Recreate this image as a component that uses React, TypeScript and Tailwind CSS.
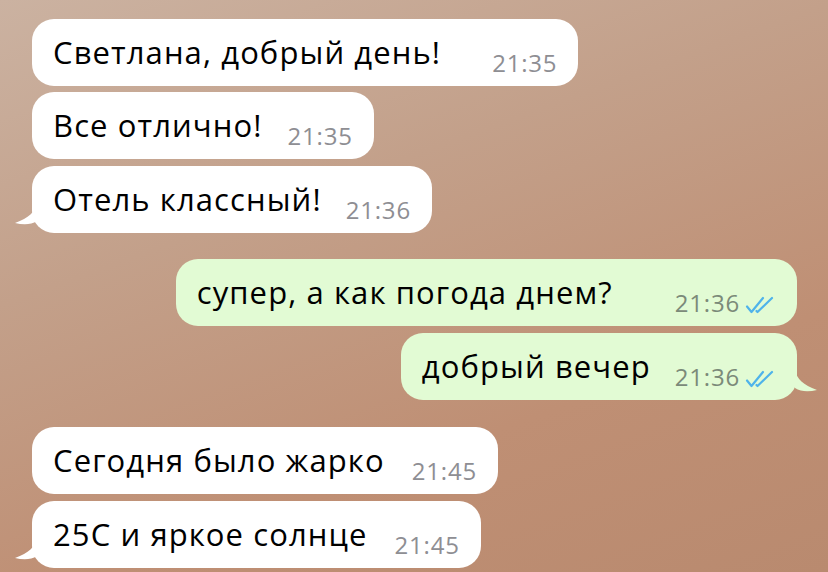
import React from 'react';

type Msg = {
  text: string;
  time: string;
  out?: boolean;
  tail?: boolean;
  gap: number;
  top: number;
};

const messages: Msg[] = [
  { text: 'Светлана, добрый день!', time: '21:35', gap: 51, top: 19 },
  { text: 'Все отлично!', time: '21:35', gap: 25, top: 6 },
  { text: 'Отель классный!', time: '21:36', gap: 24, top: 7, tail: true },
  { text: 'супер, а как погода днем?', time: '21:36', gap: 62, top: 26, out: true },
  { text: 'добрый вечер', time: '21:36', gap: 24, top: 7, out: true, tail: true },
  { text: 'Сегодня было жарко', time: '21:45', gap: 27, top: 27 },
  { text: '25С и яркое солнце', time: '21:45', gap: 27, top: 7, tail: true },
];

const DoubleCheck = () => (
  <svg width="30" height="18" viewBox="0 0 30 18" fill="none" className="ml-[5px] mb-[1px]">
    <path d="M2 10.5 L6.5 16 L18 2" stroke="#4fb3ea" strokeWidth="2.2" strokeLinecap="round" strokeLinejoin="round" />
    <path d="M11.5 15 L12.5 16 L27 2" stroke="#4fb3ea" strokeWidth="2.2" strokeLinecap="round" strokeLinejoin="round" />
  </svg>
);

const TailLeft = () => (
  <svg width="22" height="24" viewBox="0 0 22 24" className="absolute left-[-17px] bottom-[6px]">
    <path d="M22 0 C 20 9, 14 15, 0 20 C 8 22, 16 22, 22 18 Z" fill="#ffffff" />
  </svg>
);

const TailRight = () => (
  <svg width="22" height="24" viewBox="0 0 22 24" className="absolute right-[-20px] bottom-[6px]">
    <path d="M0 0 C 2 9, 8 15, 22 20 C 14 22, 6 22, 0 18 Z" fill="#e2fbd4" />
  </svg>
);

function Bubble({ m }: { m: Msg }) {
  return (
    <div
      className={`flex ${m.out ? 'justify-end pr-[31px]' : 'justify-start pl-[32px]'}`}
      style={{ marginTop: m.top }}
    >
      <div
        className={`relative flex h-[67px] items-center rounded-[22px] pl-[21px] ${
          m.out ? 'bg-[#e2fbd4] pr-[22px]' : 'bg-white pr-[21px]'
        }`}
      >
        {m.tail && (m.out ? <TailRight /> : <TailLeft />)}
        <span className="text-[31px] leading-none text-black tracking-[1.1px]">{m.text}</span>
        <span
          className={`flex items-end self-end mb-[11px] text-[24px] leading-none tracking-[0.8px] ${
            m.out ? 'text-[#7b8a79]' : 'text-[#8e8e93]'
          }`}
          style={{ marginLeft: m.gap }}
        >
          {m.time}
          {m.out && <DoubleCheck />}
        </span>
      </div>
    </div>
  );
}

export default function App() {
  return (
    <div
      className="h-[572px] w-[828px] overflow-hidden bg-[linear-gradient(160deg,#cbb2a1_0%,#c3a08a_35%,#bf8f74_70%,#b98a6f_100%)]"
      style={{ fontFamily: '"Open Sans", Roboto, "Noto Sans", sans-serif' }}
    >
      <div className="flex flex-col">
        {messages.map((m, i) => (
          <Bubble key={i} m={m} />
        ))}
      </div>
    </div>
  );
}
